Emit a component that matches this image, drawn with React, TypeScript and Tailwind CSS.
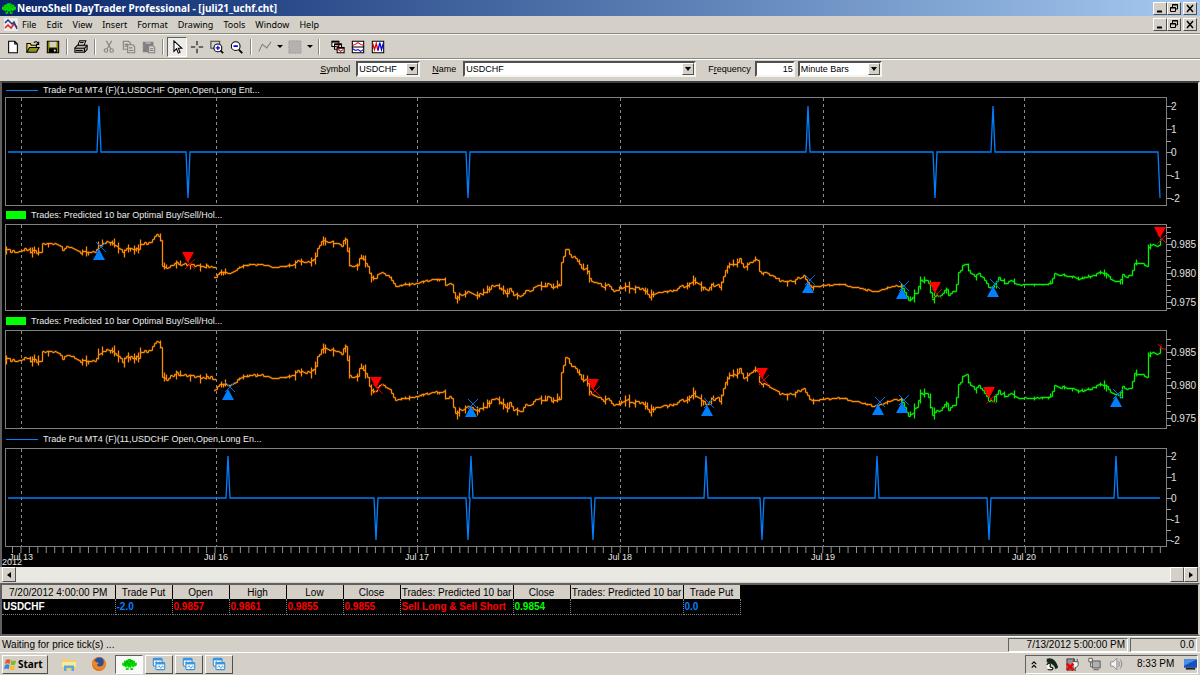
import type { ReactNode } from 'react'

type Pt = [number, number]
type Marker = { x: number; y: number; dir: 'up' | 'down' | 'exit' }
type Tick = { y: number; label?: string }

// x is the position on the time axis, y the price: 244 is 0.985, every 28.7 below is 0.005 less
const ORANGE_POINTS: Pt[][] = [
  [
    [6, 249], [12, 251], [20, 250], [24, 249], [28, 250], [33, 251], [40, 252], [42, 243], [48, 244], [55, 243], [59, 246],
    [63, 250], [66, 246], [71, 248], [78, 252], [85, 252], [94, 251], [97, 247], [104, 243], [107, 241], [112, 244], [117, 247],
    [123, 252], [127, 247], [133, 249], [138, 248], [140, 244], [146, 243], [152, 240], [156, 233], [159, 238], [160, 239],
    [161, 266], [165, 268], [171, 265], [175, 262], [183, 264], [192, 264], [200, 266], [207, 265], [214, 267],
  ],
  [
    [215, 277], [218, 273], [222, 271], [228, 273], [233, 271], [240, 266], [250, 264], [263, 264], [272, 267], [290, 265],
    [298, 260], [304, 262], [310, 260], [314, 259], [316, 251], [321, 240], [325, 241], [338, 242], [341, 245], [344, 237],
    [346, 240], [348, 263], [352, 267], [357, 264], [360, 255], [364, 262], [368, 268], [370, 277], [374, 278], [378, 273],
    [388, 274], [391, 280], [395, 286], [400, 284], [413, 283], [420, 281], [433, 279], [443, 278], [445, 283], [452, 284],
    [454, 298], [460, 294], [470, 291], [476, 294], [485, 291], [490, 286], [496, 284], [502, 289], [506, 294], [509, 288],
    [513, 293], [519, 296], [525, 290], [533, 288], [535, 284], [543, 287], [547, 283], [553, 286], [559, 284], [561, 262],
    [564, 254], [566, 245], [568, 254], [574, 257], [579, 263], [582, 270], [585, 268], [588, 273], [590, 280], [596, 281],
    [602, 286], [608, 284], [613, 290], [620, 289], [626, 286], [640, 288], [646, 291], [649, 296], [655, 292], [675, 289],
    [680, 285], [686, 286], [693, 280], [700, 285], [707, 289], [711, 285], [716, 284], [720, 286], [722, 277], [726, 267],
    [730, 263], [735, 265], [739, 259], [744, 267], [750, 261], [757, 260], [759, 271], [766, 272], [772, 275], [780, 281],
    [790, 280], [800, 277], [803, 275], [807, 282], [812, 286], [820, 285], [833, 284], [843, 284], [850, 286], [862, 288],
    [873, 291], [885, 288], [894, 285], [902, 286],
  ],
]

const GREEN_POINTS: Pt[][] = [
  [
    [902, 287], [906, 296], [909, 300], [912, 296], [916, 291], [920, 279], [925, 280], [929, 284], [931, 299], [936, 295],
    [941, 294], [945, 287], [948, 294], [952, 290], [955, 290], [957, 274], [961, 268], [963, 262], [966, 264], [969, 272],
    [974, 276], [977, 273], [982, 276], [985, 282], [989, 287], [993, 285], [998, 277], [1005, 284], [1010, 280], [1015, 284],
    [1050, 283], [1053, 274], [1060, 274], [1075, 276], [1078, 278], [1090, 276], [1098, 272], [1105, 272], [1110, 278],
    [1118, 281], [1122, 275], [1131, 276], [1133, 264], [1137, 262], [1146, 265], [1148, 246], [1158, 245], [1161, 238],
  ],
]

const CALM: Pt[] = [[238, 292], [388, 443], [655, 678], [815, 900], [1018, 1048], [1062, 1100]]
const DAYS = [21, 216, 417, 620, 823, 1024]
const DATE_LABELS = ['Jul 13', 'Jul 16', 'Jul 17', 'Jul 18', 'Jul 19', 'Jul 20']
const LEFT = 5
const PLOT_W = 1162

function noise(n: number) {
  const v = Math.sin(n * 12.9898) * 43758.5453
  return v - Math.floor(v)
}

function valueAt(points: Pt[], x: number) {
  for (let i = 1; i < points.length; i++) {
    const [x0, y0] = points[i - 1]
    const [x1, y1] = points[i]
    if (x <= x1) return y0 + ((y1 - y0) * (x - x0)) / (x1 - x0)
  }
  return points[points.length - 1][1]
}

// Open/high/low/close bars, 15 minutes each
function barsPath(points: Pt[], toY: (v: number) => number) {
  const y = (v: number) => Math.round(toY(v)) + 0.5
  let d = ''
  let prev = points[0][1]
  const end = points[points.length - 1][0]
  for (let x = points[0][0]; x <= end; x += 2) {
    const calm = CALM.some(([a, b]) => x >= a && x <= b)
    const amp = calm ? 1 : 2.5
    const close = valueAt(points, x) + (noise(x) - 0.5) * amp
    const wick = noise(x + 7) > 0.72 ? (calm ? 2 : 5) : 0
    const hi = Math.min(prev, close) - wick * noise(x + 3)
    const lo = Math.max(prev, close) + wick * noise(x + 4)
    const px = x - LEFT + 0.5
    d += `M${px - 1.5} ${y(prev)}H${px}M${px} ${y(hi)}V${y(lo)}M${px} ${y(close)}h1.5`
    prev = close
  }
  return d
}

function Plot({ h, ticks, children }: { h: number; ticks: Tick[]; children: ReactNode }) {
  return (
    <div className="flex pl-[3px]">
      <svg className="block min-w-0 flex-1" height={h} viewBox={`0 0 ${PLOT_W} ${h}`} preserveAspectRatio="none">
        {DAYS.map((x) => (
          <path key={x} d={`M${x - LEFT + 0.5} 1V${h}`} stroke="#8c8c8c" strokeDasharray="3 3" />
        ))}
        <rect x="0.5" y="0.5" width={PLOT_W - 1} height={h - 1} fill="none" stroke="#808080" />
        {children}
      </svg>
      <svg className="block w-[31px] shrink-0 overflow-visible" height={h}>
        {ticks.map((t) => (
          <g key={t.y}>
            <path d={`M0 ${t.y + 0.5}h${t.label ? 5 : 4}`} stroke="#a0a0a0" />
            {t.label && (
              <text x="4" y={t.y + 4} fill="#e0e0e0" className="font-['Liberation_Sans'] text-[10px]">
                {t.label}
              </text>
            )}
          </g>
        ))}
      </svg>
    </div>
  )
}

function SignalPlot({ h, zero, unit, up, down, last }: { h: number; zero: number; unit: number; up: number[]; down: number[]; last?: boolean }) {
  const spikes = [...up.map((x) => ({ x, s: -1 })), ...down.map((x) => ({ x, s: 1 }))].sort((a, b) => a.x - b.x)
  let d = `M3 ${zero}`
  spikes.forEach(({ x, s }) => {
    const px = x - LEFT
    d += `H${px - 2}L${px} ${zero + s * unit * 2}L${px + 2} ${zero}`
  })
  d += last ? `H1153L1155 ${zero + unit * 2}` : 'H1155'
  const ticks: Tick[] = []
  for (let v = 4; v >= -4; v--) {
    ticks.push({ y: Math.round(zero - (v * unit) / 2), label: v % 2 === 0 ? String(v / 2) : undefined })
  }
  return (
    <Plot h={h} ticks={ticks}>
      <path d={d} fill="none" stroke="#0080ff" strokeWidth="1.3" />
    </Plot>
  )
}

function PricePlot({ h, top, step, markers }: { h: number; top: number; step: number; markers: Marker[] }) {
  const toY = (v: number) => top + ((v - 244) * step) / 28.7
  const ticks: Tick[] = []
  for (let i = -3; i <= 11; i++) {
    const y = Math.round(top + (i * step) / 5)
    if (y > 2 && y < h - 2) ticks.push({ y, label: i % 5 === 0 ? (0.985 - i / 1000).toFixed(3) : undefined })
  }
  return (
    <Plot h={h} ticks={ticks}>
      <g fill="none" strokeWidth="1.3">
        {ORANGE_POINTS.map((p) => <path key={p[0][0]} d={barsPath(p, toY)} stroke="#ff8c00" />)}
        {GREEN_POINTS.map((p) => <path key={p[0][0]} d={barsPath(p, toY)} stroke="#00f000" />)}
      </g>
      {markers.map((m) => {
        const x = m.x - LEFT
        if (m.dir === 'exit') return <path key={m.x} d={`M${x} ${m.y}v5h5M${x - 3} ${m.y}l5 5`} stroke="#e00000" fill="none" />
        const up = m.dir === 'up'
        const cy = up ? m.y - 2 : m.y + 12
        return (
          <g key={m.x}>
            <path d={`M${x - 3} ${cy - 5}l10 10m0 -10l-10 10`} stroke={up ? '#0070e0' : '#d00000'} fill="none" />
            <path d={up ? `M${x} ${m.y}l6 11h-12z` : `M${x - 6} ${m.y}h12l-6 11z`} fill={up ? '#0080ff' : '#ff0000'} />
          </g>
        )
      })}
    </Plot>
  )
}

function Legend({ kind, text, className }: { kind: 'line' | 'box'; text: string; className: string }) {
  return (
    <div className={`flex items-center pl-1 text-[9px] text-[#ececec] ${className}`}>
      {kind === 'line' ? <span className="w-8 border-t border-t-[#0080ff]" /> : <span className="h-2 w-5 bg-[#00ff00]" />}
      <span className="ml-[5px]">{text}</span>
    </div>
  )
}

const RAISED = 'border border-t-white border-l-white border-r-[#505050] border-b-[#505050] bg-[#d4d0c8]'
const SUNKEN = 'border border-t-[#606060] border-l-[#606060] border-r-white border-b-white'

function WindowButtons() {
  return (
    <div className="flex h-[13px]">
      <button aria-label="Minimize" className={`w-[14px] ${RAISED}`}>
        <svg viewBox="0 0 12 11" className="block h-full w-full"><path d="M3 8.5h5" stroke="#000" strokeWidth="2" /></svg>
      </button>
      <button aria-label="Restore" className={`w-[14px] ${RAISED}`}>
        <svg viewBox="0 0 12 11" className="block h-full w-full" fill="none" stroke="#000">
          <path d="M4.5 4V1.5h5V6H8M4 2h6M2.5 4.500h5v4h-5zM2 5h6" />
        </svg>
      </button>
      <button aria-label="Close" className={`ml-[2px] w-[14px] ${RAISED}`}>
        <svg viewBox="0 0 12 11" className="block h-full w-full"><path d="M3 2l6 7M9 2l-6 7" stroke="#000" strokeWidth="1.5" /></svg>
      </button>
    </div>
  )
}

function TreeIcon({ className }: { className: string }) {
  return (
    <svg viewBox="0 0 16 12" className={className}>
      <path d="M6 0h4v1h2v1h2v2h2v3h-1v1h-2v1h-2V8h-1v2h2v2H9V9H7v3H4v-2h2V8H5v1H3V8H1V7H0V4h2V2h2V1h2z" fill="#00d800" />
      <path d="M5 3h1v1H5zM9 2h1v1H9zM11 4h1v1h-1zM7 5h1v1H7zM3 5h1v1H3z" fill="#006000" />
    </svg>
  )
}

function ToolButton({ label, active, children }: { label: string; active?: boolean; children: ReactNode }) {
  return (
    <button aria-label={label} className={`flex h-5 w-5 items-center justify-center ${active ? `bg-[#ecebe8] ${SUNKEN}` : ''}`}>
      <svg viewBox="0 0 16 16" className="h-[14px] w-[14px] shrink-0" fill="none" stroke="#000" strokeWidth="1.2">
        {children}
      </svg>
    </button>
  )
}

function DropButton({ label }: { label: string }) {
  return (
    <button aria-label={label} className="flex h-5 w-[10px] items-center justify-center">
      <svg viewBox="0 0 6 3" className="h-[3px] w-[6px]"><path d="M0 0h6L3 3z" /></svg>
    </button>
  )
}

function Separator() {
  return <span className="mx-[3px] h-4 w-[2px] border-l border-l-[#8c8a85] border-r border-r-white" />
}

function Combo({ id, value, className }: { id: string; value: string; className: string }) {
  return (
    <div className={`relative h-4 border-2 border-t-[#505050] border-l-[#505050] border-r-[#f4f4f0] border-b-[#f4f4f0] bg-white ${className}`}>
      <select id={id} defaultValue={value} className="block h-full w-full appearance-none bg-white pl-px text-[9px] leading-3 outline-none">
        <option>{value}</option>
      </select>
      <span className={`pointer-events-none absolute inset-y-0 right-0 flex w-3 items-center justify-center ${RAISED}`}>
        <svg viewBox="0 0 6 4" className="h-1 w-[6px]"><path d="M0 0h6L3 4z" /></svg>
      </span>
    </div>
  )
}

const COLUMNS = [
  { head: '7/20/2012 4:00:00 PM', value: 'USDCHF', w: 'w-[113px]', color: 'text-white' },
  { head: 'Trade Put', value: '-2.0', w: 'w-[57px]', color: 'text-[#0080ff]' },
  { head: 'Open', value: '0.9857', w: 'w-[57px]', color: 'text-[#ff0000]' },
  { head: 'High', value: '0.9861', w: 'w-[57px]', color: 'text-[#ff0000]' },
  { head: 'Low', value: '0.9855', w: 'w-[57px]', color: 'text-[#ff0000]' },
  { head: 'Close', value: '0.9855', w: 'w-[57px]', color: 'text-[#ff0000]' },
  { head: 'Trades: Predicted 10 bar', value: 'Sell Long & Sell Short', w: 'w-[113px]', color: 'text-[#ff0000]' },
  { head: 'Close', value: '0.9854', w: 'w-[57px]', color: 'text-[#00ff00]' },
  { head: 'Trades: Predicted 10 bar', value: '', w: 'w-[113px]', color: 'text-white' },
  { head: 'Trade Put', value: '0.0', w: 'w-[57px]', color: 'text-[#0080ff]' },
]

function ChartTaskIcon() {
  return (
    <svg viewBox="0 0 16 16" className="h-[14px] w-[14px]" fill="#fff" stroke="#3c94dc" strokeWidth="1.3">
      <rect x="1.500" y="1.500" width="10" height="9" rx="1" />
      <path d="M1.500 3h10" strokeWidth="2" />
      <path d="M3 7l2-2 2 3 2-3" fill="none" strokeWidth="1" />
      <rect x="4.500" y="6.500" width="10" height="8" rx="1" />
      <path d="M4.500 7.500h10" strokeWidth="2" />
      <path d="M6 12l2-2 2 3 2-3 1 2" fill="none" strokeWidth="1" />
    </svg>
  )
}

export default function App() {
  const ticks = Array.from({ length: 137 }, (_, i) => 12.5 + i * 8.44)
  return (
    <div className="flex min-h-screen flex-col bg-[#d4d0c8] font-['Liberation_Sans',Arial,sans-serif] text-[10px] leading-3 text-black">
      <header className="flex h-4 items-center justify-between bg-linear-to-r from-[#0a246a] to-[#a6caf0] pr-[3px] pl-[2px]">
        <div className="flex items-center gap-px text-white">
          <TreeIcon className="h-[11px] w-[14px]" />
          <h1 className="font-['Noto_Sans',sans-serif] text-[10px] font-bold whitespace-nowrap">NeuroShell DayTrader Professional - [juli21_uchf.cht]</h1>
        </div>
        <WindowButtons />
      </header>

      <nav className="flex h-[18px] items-center justify-between border-b border-b-[#8c8a85] pr-[3px] pl-1">
        <div className="flex items-center gap-[10px] font-['Noto_Sans',sans-serif] text-[9px]">
          <svg viewBox="0 0 14 13" className="mr-[-6px] h-[13px] w-[14px]" fill="none" strokeWidth="1.5">
            <rect width="14" height="13" fill="#ecebe8" />
            <path d="M1 10l3-3 3 3 3-4 3 3" stroke="#e02020" />
            <path d="M1 5l3-3 4 4 2-2 3 7" stroke="#203880" />
          </svg>
          {['File', 'Edit', 'View', 'Insert', 'Format', 'Drawing', 'Tools', 'Window', 'Help'].map((m) => (
            <button key={m}>{m}</button>
          ))}
        </div>
        <WindowButtons />
      </nav>

      <div className="flex h-[25px] items-center border-t border-t-[#f4f4f0] border-b border-b-[#8c8a85] pl-[3px]">
        <ToolButton label="New">
          <path d="M3 1.500h7l3 3v10H3zM10 1.500v3h3" fill="#fff" />
        </ToolButton>
        <ToolButton label="Open">
          <path d="M1 14V4h4l1 2h6v3" fill="#e8d860" />
          <path d="M1 14l3-5.500h11L12 14z" fill="#909020" />
          <path d="M9 3c2-2 4-1 5 1M14.500 2v3h-3" />
        </ToolButton>
        <ToolButton label="Save">
          <path d="M1.500 1.500h13v13h-13z" fill="#808000" />
          <path d="M4 2h8v6H4z" fill="#d4d0c8" stroke="none" />
          <path d="M4 10h8v4H4z" fill="#000" />
          <path d="M10 11v2" stroke="#fff" strokeWidth="2" />
        </ToolButton>
        <Separator />
        <ToolButton label="Print">
          <path d="M4.500 6l2-5h7l-2 5z" fill="#fff" />
          <path d="M1 9l3-3h11v5l-3 3H1z" fill="#b0aea8" />
          <path d="M1 9.500h11l3-3M12 9v5M7 3h4M2 12h8" />
        </ToolButton>
        <Separator />
        <ToolButton label="Cut">
          <path d="M5 1l5 9M11 1L6 10" stroke="#808080" />
          <circle cx="4.500" cy="12" r="2" stroke="#808080" />
          <circle cx="11" cy="12" r="2" stroke="#808080" />
        </ToolButton>
        <ToolButton label="Copy">
          <path d="M1.500 1.500h6l2 2v7h-8zM3 5h4M3 7h4" stroke="#808080" />
          <path d="M6.500 5.500h6l2 2v7h-8zM8 9h4M8 12h5" fill="#d4d0c8" stroke="#808080" />
        </ToolButton>
        <ToolButton label="Paste">
          <path d="M1.500 2.500h11v11h-11z" fill="#808080" stroke="#808080" />
          <path d="M4 3.500h6" stroke="#d4d0c8" />
          <path d="M7.500 6.500h5l2 2v6h-7zM9 10h4M9 12h4" fill="#d4d0c8" stroke="#808080" />
        </ToolButton>
        <Separator />
        <ToolButton label="Pointer" active>
          <path d="M4.500 1v12l3-3 2 5 2-1-2-4.500h4z" fill="#fff" />
        </ToolButton>
        <ToolButton label="Crosshair">
          <path d="M8 1v5M8 10v5M1 8h5M10 8h5" />
        </ToolButton>
        <ToolButton label="Zoom in">
          <path d="M5 9.500H1V1.500h10v3" stroke="#404040" />
          <circle cx="9" cy="9" r="4.500" fill="#fff" />
          <path d="M6.500 9h5M9 6.500v5" stroke="#0000ff" strokeWidth="1.500" />
          <path d="M12 12l3 3" strokeWidth="2" />
        </ToolButton>
        <ToolButton label="Zoom out">
          <circle cx="6.500" cy="7" r="5" fill="#fff" />
          <path d="M4 7h5" stroke="#0000ff" strokeWidth="2" />
          <path d="M10 11l4 4" strokeWidth="2" />
        </ToolButton>
        <Separator />
        <ToolButton label="Line">
          <path d="M1 13l4-8 5 4 5-7" stroke="#808080" />
        </ToolButton>
        <DropButton label="Line styles" />
        <ToolButton label="Fill">
          <path d="M1 1h14v14H1z" fill="#b4b2ae" stroke="#9c9a96" strokeDasharray="1 1" />
        </ToolButton>
        <DropButton label="Fill styles" />
        <Separator />
        <span className="w-[5px]" />
        <ToolButton label="Cascade charts">
          <path d="M1 1.500h8v6H1zM4 4.500h8v6H4z" fill="#fff" />
          <path d="M1 2h8" strokeWidth="2" />
          <path d="M7 8.500h8v6H7z" fill="#fff" />
          <path d="M4 5h8M7 9h8" strokeWidth="2" />
          <path d="M7 12l2-1 2 2 3-2M5 8l3-1" stroke="#e00000" />
        </ToolButton>
        <ToolButton label="Stack charts">
          <path d="M1.500 1.500h13v13h-13z" fill="#fff" />
          <path d="M1 8h14" />
          <path d="M2 6l3-1 3-2 3 2 3 1" stroke="#e00000" />
          <path d="M2 10l3 2 3-1 3 2 3-2" stroke="#0000e0" />
        </ToolButton>
        <ToolButton label="Compare charts">
          <path d="M1.500 1.500h13v13h-13z" fill="#fff" />
          <path d="M2 4l2 7 2-7 2 8" stroke="#e00000" strokeWidth="1.500" />
          <path d="M8 12l2-9 2 8 2-7" stroke="#0000e0" strokeWidth="1.500" />
        </ToolButton>
      </div>

      <div className="flex h-[22px] items-start justify-center border-t border-t-white pt-px pl-[2px] text-[9px] leading-4">
        <label htmlFor="symbol" className="mr-[6px]"><u>S</u>ymbol</label>
        <Combo id="symbol" value="USDCHF" className="w-16" />
        <label htmlFor="name" className="mr-[7px] ml-3"><u>N</u>ame</label>
        <Combo id="name" value="USDCHF" className="w-[233px]" />
        <label htmlFor="frequency" className="mr-[4px] ml-3">F<u>r</u>equency</label>
        <input
          id="frequency"
          defaultValue="15"
          className="mr-[3px] h-4 w-[40px] border-2 border-t-[#505050] border-l-[#505050] border-r-[#f4f4f0] border-b-[#f4f4f0] bg-white text-right outline-none"
        />
        <label htmlFor="unit" className="sr-only" aria-label="Bar unit" />
        <Combo id="unit" value="Minute Bars" className="w-[84px]" />
      </div>

      <main className="border-t-2 border-r-2 border-l-2 border-t-[#404040] border-r-[#e8e6e0] border-l-[#606060] bg-black">
        <Legend kind="line" text="Trade Put MT4 (F)(1,USDCHF Open,Open,Long Ent..." className="h-[14px]" />
        <SignalPlot h={109} zero={55} unit={23} up={[99, 808, 993]} down={[188, 468, 935]} last />
        <Legend kind="box" text="Trades: Predicted 10 bar Optimal Buy/Sell/Hol..." className="h-[18px]" />
        <PricePlot
          h={87}
          top={20}
          step={29}
          markers={[
            { x: 99, y: 25, dir: 'up' }, { x: 188, y: 28, dir: 'down' }, { x: 808, y: 58, dir: 'up' }, { x: 902, y: 64, dir: 'up' },
            { x: 935, y: 58, dir: 'down' }, { x: 993, y: 62, dir: 'up' }, { x: 1160, y: 3, dir: 'down' },
          ]}
        />
        <Legend kind="box" text="Trades: Predicted 10 bar Optimal Buy/Sell/Hol..." className="h-[19px]" />
        <PricePlot
          h={99}
          top={22}
          step={33}
          markers={[
            { x: 228, y: 59, dir: 'up' }, { x: 376, y: 47, dir: 'down' }, { x: 471, y: 76, dir: 'up' }, { x: 593, y: 49, dir: 'down' },
            { x: 707, y: 75, dir: 'up' }, { x: 762, y: 38, dir: 'down' }, { x: 878, y: 74, dir: 'up' }, { x: 902, y: 72, dir: 'up' },
            { x: 989, y: 57, dir: 'down' }, { x: 1116, y: 66, dir: 'up' }, { x: 1161, y: 14, dir: 'exit' },
          ]}
        />
        <Legend kind="line" text="Trade Put MT4 (F)(11,USDCHF Open,Open,Long En..." className="h-[19px] pt-px" />
        <SignalPlot h={99} zero={50} unit={21} up={[228, 471, 706, 877, 1116]} down={[376, 468, 593, 762, 989]} />
        <svg className="block h-5 w-full text-[9px]" fill="#e4e4e4">
          {ticks.map((x) => (
            <line key={x} x1={`${((x - 2) / 1196) * 100}%`} x2={`${((x - 2) / 1196) * 100}%`} y1="0" y2="6" stroke="#909090" />
          ))}
          <text x="0" y="18">2012</text>
          {DAYS.map((x, i) => (
            <text key={x} x={`${((x - 2) / 1196) * 100}%`} y="13" textAnchor="middle">{DATE_LABELS[i]}</text>
          ))}
        </svg>
      </main>

      <div className="flex h-[15px] border-r-2 border-l-2 border-r-[#d4d0c8] border-l-[#d4d0c8] bg-[#eae8e3]">
        <button aria-label="Scroll left" className={`flex w-[14px] items-center justify-center ${RAISED}`}>
          <svg viewBox="0 0 4 6" className="h-[6px] w-1"><path d="M4 0v6L0 3z" /></svg>
        </button>
        <span className="flex-1" />
        <span className={`w-[14px] ${RAISED}`} />
        <button aria-label="Scroll right" className={`flex w-[14px] items-center justify-center ${RAISED}`}>
          <svg viewBox="0 0 4 6" className="h-[6px] w-1"><path d="M0 0v6l4-3z" /></svg>
        </button>
      </div>

      <section className="mt-px h-[53px] border-t-2 border-r-2 border-b-2 border-l-2 border-t-[#606060] border-r-[#d4d0c8] border-b-[#606060] border-l-[#606060] bg-black">
        <table className="table-fixed border-collapse">
          <thead>
            <tr className="h-[14px]">
              {COLUMNS.map((c, i) => (
                <th key={i} scope="col" className={`border-r border-r-black bg-[#d4d0c8] p-0 pt-px text-center font-normal whitespace-nowrap ${c.w}`}>{c.head}</th>
              ))}
            </tr>
          </thead>
          <tbody>
            <tr className="h-[15px]">
              {COLUMNS.map((c, i) => (
                <td key={i} className={`border-r border-b border-dotted border-[#808080] p-0 pt-px pl-px text-left font-bold whitespace-nowrap ${c.color}`}>{c.value}</td>
              ))}
            </tr>
          </tbody>
        </table>
      </section>

      <div className="flex h-4 items-center justify-between border-t border-t-white pr-[3px] pl-[2px]">
        <span>Waiting for price tick(s) ...</span>
        <div className="flex gap-[2px] text-right">
          <span className={`w-[120px] pr-[2px] ${SUNKEN}`}>7/13/2012 5:00:00 PM</span>
          <span className={`w-[67px] pr-[2px] ${SUNKEN}`}>0.0</span>
        </div>
      </div>

      <footer className="flex h-[23px] items-center border-t border-t-white pr-[2px] pl-[2px]">
        <button className={`flex h-[19px] w-[46px] items-center gap-px pl-px font-['Noto_Sans',sans-serif] text-[10px] font-bold ${RAISED}`}>
          <svg viewBox="0 0 14 14" className="h-[13px] w-[13px] shrink-0">
            <path d="M2 2c2-1 3-1 5 0L6 6.500c-2-1-3-1-5 0z" fill="#e8582c" />
            <path d="M8 2.500c2 1 3 1 5 0L12 7c-2 1-3 1-5 0z" fill="#80b830" />
            <path d="M1 7.500c2-1 3-1 5 0L5 12c-2-1-3-1-5 0z" fill="#4080e0" />
            <path d="M7 8c2 1 3 1 5 0l-1 4.500c-2 1-3 1-5 0z" fill="#f8c020" />
          </svg>
          Start
        </button>
        <button aria-label="Explorer" className="ml-[13px]">
          <svg viewBox="0 0 16 16" className="block h-4 w-4">
            <path d="M1 3h5l1 1h8v10H1z" fill="#f0d070" />
            <path d="M1 6h14v5H1z" fill="#f8e8a0" />
            <path d="M3 15V9.500h10V15h-2.500v-3h-5v3z" fill="#58a8e0" />
          </svg>
        </button>
        <button aria-label="Firefox" className="ml-[14px]">
          <svg viewBox="0 0 16 16" className="block h-4 w-4">
            <circle cx="8" cy="8" r="7" fill="#e06810" />
            <circle cx="8.500" cy="6.500" r="5" fill="#2850a0" />
            <path d="M1 5c2-1 3 0 4 1l3 1c-1 1-2 1-2 2 1 2 4 2 6 0 1-2 1-4 0-6 3 2 4 6 1 9-4 4-12 1-12-7z" fill="#f08820" />
          </svg>
        </button>
        <button aria-label="NeuroShell" className={`ml-2 flex h-[19px] w-[28px] items-center justify-center bg-[#f8f8f6] ${SUNKEN}`}>
          <TreeIcon className="h-[11px] w-[15px]" />
        </button>
        {['Chart 1', 'Chart 2', 'Chart 3'].map((n) => (
          <button key={n} aria-label={n} className={`ml-[2px] flex h-[19px] w-[28px] items-center justify-center ${RAISED}`}>
            <ChartTaskIcon />
          </button>
        ))}
        <div className={`ml-auto flex h-[19px] w-[173px] items-center pl-1 ${SUNKEN}`}>
          <svg viewBox="0 0 8 10" className="h-[9px] w-[8px]" fill="none" stroke="#000" strokeWidth="1.3"><path d="M1.500 4.500L4 2l2.500 2.500M1.500 8.500L4 6l2.500 2.500" /></svg>
          <svg viewBox="0 0 16 16" className="ml-[7px] h-[14px] w-[14px]">
            <path d="M2 2c5-2 11 1 13 10l-3 2C11 10 8 7 2 6z" fill="#102818" />
            <path d="M2 9c2-3 5-2 4 1s3 1 3 3-4 2-6 1" stroke="#202020" strokeWidth="1.500" fill="#fff" />
          </svg>
          <svg viewBox="0 0 16 16" className="ml-[6px] h-[15px] w-[15px]">
            <path d="M2 2h8v12H2z" fill="#909090" stroke="#404040" />
            <path d="M8 5h6v3c0 2-1 3-3 3v4M9 2v3M13 2v3" fill="#f4f4f4" stroke="#505050" />
            <path d="M2 7l7 7M9 7l-7 7" stroke="#f00000" strokeWidth="2.500" />
          </svg>
          <svg viewBox="0 0 16 16" className="ml-[7px] h-[14px] w-[15px]" fill="none" stroke="#707070">
            <path d="M5.500 4.500h9v8h-9z" fill="#b0b0b0" stroke="#505050" />
            <path d="M7 14.500h6M1.500 1.500h4v4h-4zM3.500 6v5h2" fill="#f4f4f4" stroke="#505050" />
          </svg>
          <svg viewBox="0 0 16 16" className="ml-[7px] h-[14px] w-[14px]" fill="#f4f4f4" stroke="#808080">
            <path d="M2 5.500h3l4-4v13l-4-4H2z" />
            <path d="M11 5c1 2 1 4 0 6M13 3c2 3 2 7 0 10" fill="none" />
          </svg>
          <time className="ml-[14px] whitespace-nowrap">8:33 PM</time>
          <svg viewBox="0 0 14 12" className="ml-auto h-[12px] w-[13px]">
            <path d="M0 1h14v9H0z" fill="#1850b8" />
            <path d="M0 1h14L0 8z" fill="#4890e8" />
            <path d="M2 11h10" stroke="#202020" strokeWidth="2" />
          </svg>
        </div>
      </footer>
    </div>
  )
}
